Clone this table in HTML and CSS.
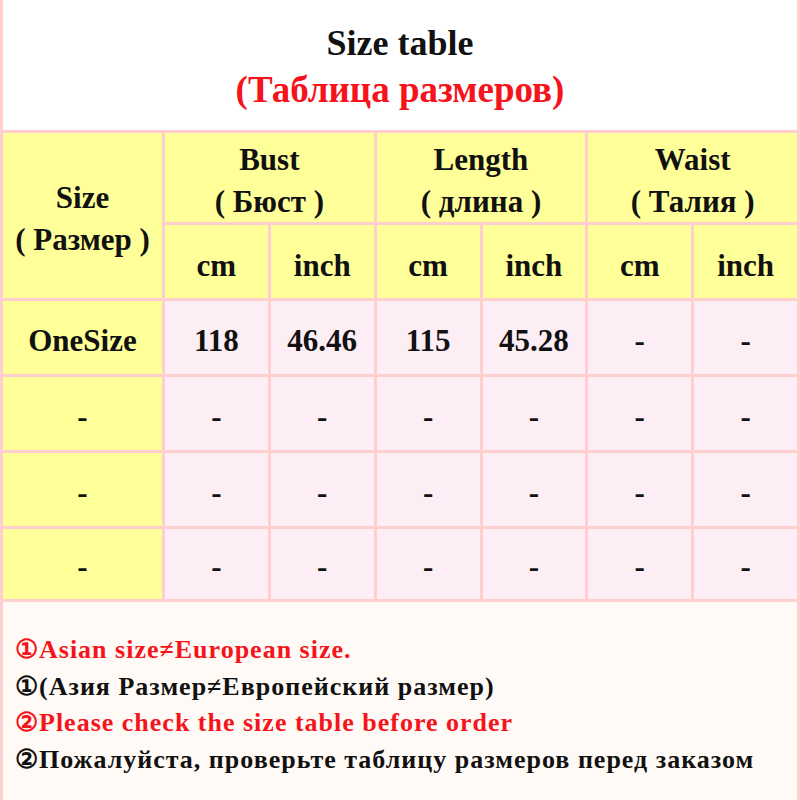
FILE: index.html
```html
<!DOCTYPE html>
<html lang="ru">
<head>
<meta charset="utf-8">
<title>Size table</title>
<link rel="stylesheet" href="styles.css">
</head>
<body>
<div class="page">
  <header class="title">
    <div class="title-en">Size table</div>
    <div class="title-ru">(Таблица размеров)</div>
  </header>
  <div class="grid">
    <div class="cell head size-head">Size<br>( Размер )</div>
    <div class="cell head group">Bust<br>( Бюст )</div>
    <div class="cell head group">Length<br>( длина )</div>
    <div class="cell head group">Waist<br>( Талия )</div>
    <div class="cell head unit">cm</div>
    <div class="cell head unit">inch</div>
    <div class="cell head unit">cm</div>
    <div class="cell head unit">inch</div>
    <div class="cell head unit">cm</div>
    <div class="cell head unit">inch</div>

    <div class="cell head">OneSize</div>
    <div class="cell data">118</div>
    <div class="cell data">46.46</div>
    <div class="cell data">115</div>
    <div class="cell data">45.28</div>
    <div class="cell data">-</div>
    <div class="cell data">-</div>

    <div class="cell head">-</div>
    <div class="cell data">-</div>
    <div class="cell data">-</div>
    <div class="cell data">-</div>
    <div class="cell data">-</div>
    <div class="cell data">-</div>
    <div class="cell data">-</div>

    <div class="cell head">-</div>
    <div class="cell data">-</div>
    <div class="cell data">-</div>
    <div class="cell data">-</div>
    <div class="cell data">-</div>
    <div class="cell data">-</div>
    <div class="cell data">-</div>

    <div class="cell head">-</div>
    <div class="cell data">-</div>
    <div class="cell data">-</div>
    <div class="cell data">-</div>
    <div class="cell data">-</div>
    <div class="cell data">-</div>
    <div class="cell data">-</div>
  </div>
  <div class="notes">
    <p class="note red">①Asian size≠European size.</p>
    <p class="note">①(Азия Размер≠Европейский размер)</p>
    <p class="note red">②Please check the size table before order</p>
    <p class="note">②Пожалуйста, проверьте таблицу размеров перед заказом</p>
  </div>
</div>
</body>
</html>
```

FILE: styles.css
```css
html, body {
  margin: 0;
  padding: 0;
  background: #ffffff;
}

.page {
  width: 800px;
  height: 800px;
  box-sizing: border-box;
  border-left: 3px solid #ffcfcf;
  border-right: 3px solid #ffcfcf;
  font-family: "Liberation Serif", "Times New Roman", serif;
  font-weight: bold;
  color: #111111;
  display: flex;
  flex-direction: column;
  overflow: hidden;
}

.title {
  height: 130px;
  background: #ffffff;
  display: flex;
  flex-direction: column;
  align-items: center;
  padding-top: 22px;
  box-sizing: border-box;
}

.title-en {
  font-size: 36px;
  line-height: 42px;
  color: #111111;
}

.title-ru {
  font-size: 37px;
  line-height: 52px;
  color: #f5141c;
}

.grid {
  display: grid;
  grid-template-columns: 159px repeat(6, 1fr);
  grid-template-rows: 89px 73px 73px 73px 73px 70px;
  gap: 3px;
  padding-top: 3px;
  padding-bottom: 3px;
  background: #ffcfcf;
}

.cell {
  display: flex;
  align-items: center;
  justify-content: center;
  text-align: center;
  font-size: 31px;
  line-height: 42px;
  padding-top: 6px;
  box-sizing: border-box;
}

.head {
  background: #ffff99;
}

.data {
  background: #fdeef6;
}

.size-head {
  grid-row: span 2;
}

.group {
  grid-column: span 2;
}

.unit {
  padding-top: 8px;
}

.notes {
  flex: 1;
  background: #fffaf5;
  padding: 30px 0 0 12px;
}

.note {
  margin: 0;
  font-size: 26px;
  letter-spacing: 1px;
  line-height: 36.5px;
  white-space: nowrap;
}

.red {
  color: #f5141c;
}
```
